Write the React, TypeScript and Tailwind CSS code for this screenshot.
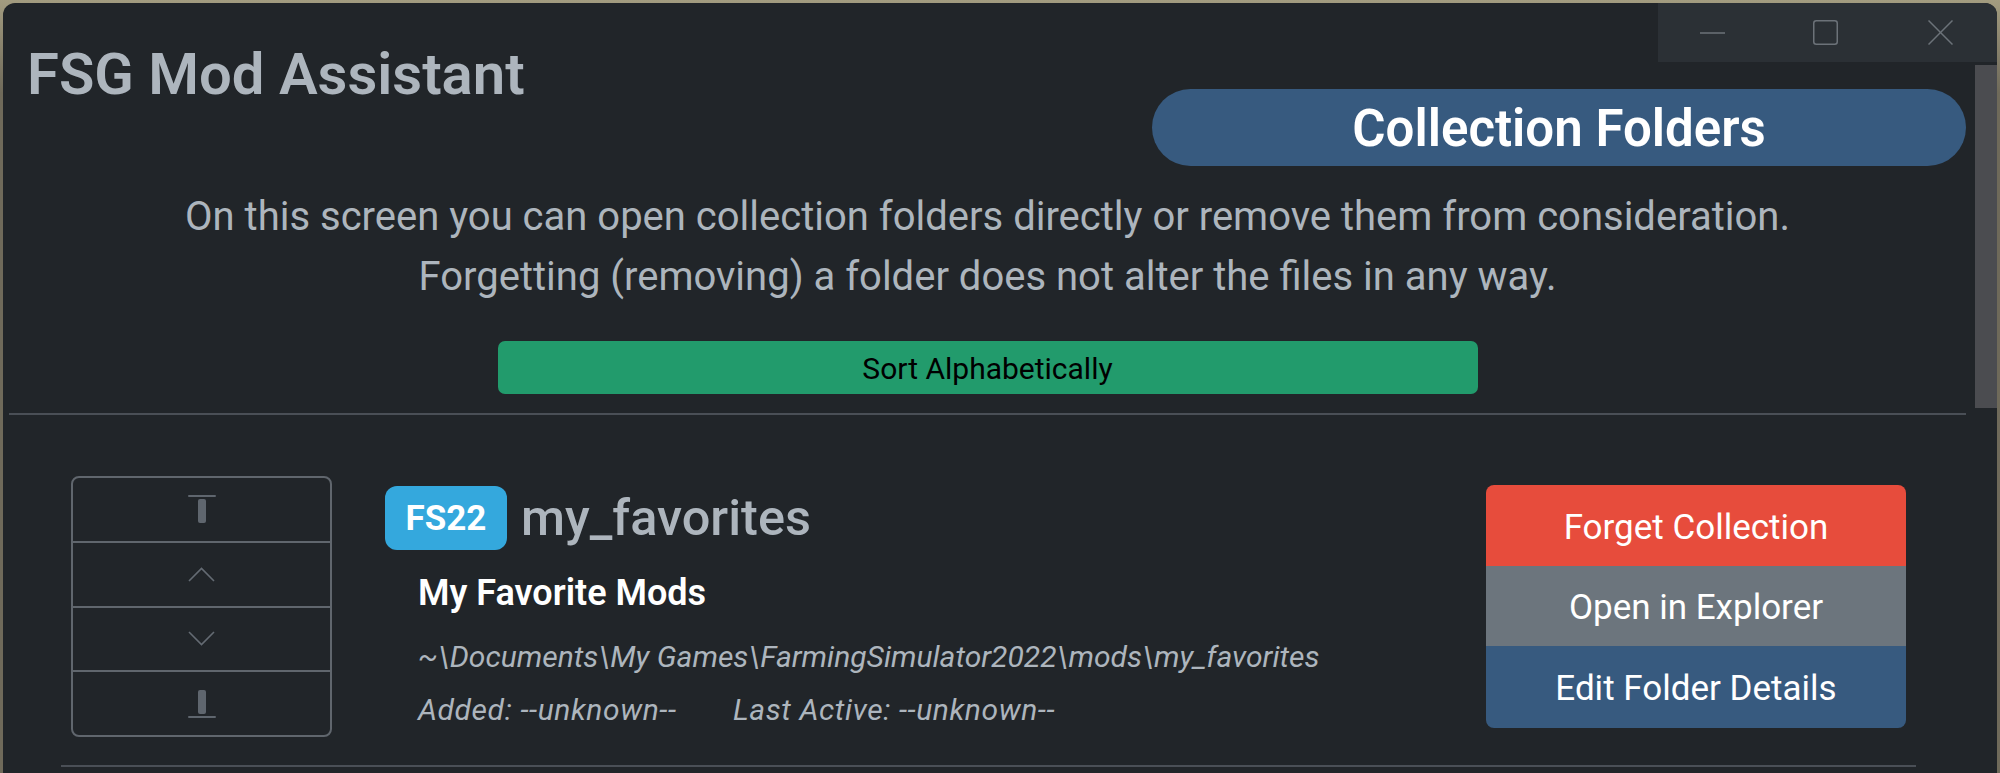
import React from "react";

function AlignTop() {
  return (
    <svg width="32" height="32" viewBox="0 0 16 16" fill="#5f666e">
      <rect width="4" height="12" rx="1" transform="matrix(1 0 0 -1 6 15)" />
      <path d="M1.5 2a.5.5 0 0 1 0-1v1zm13-1a.5.5 0 0 1 0 1V1zm-13 0h13v1h-13V1z" />
    </svg>
  );
}

function AlignBottom() {
  return (
    <svg width="32" height="32" viewBox="0 0 16 16" fill="#5f666e">
      <rect width="4" height="12" x="6" y="1" rx="1" />
      <path d="M1.5 14a.5.5 0 0 0 0 1v-1zm13 1a.5.5 0 0 0 0-1v1zm-13 0h13v-1h-13v1z" />
    </svg>
  );
}

function ChevronUp() {
  return (
    <svg width="27" height="15" viewBox="0 0 27 15" fill="none">
      <polyline points="1,14 13.5,1.5 26,14" stroke="#646b73" strokeWidth="1.6" />
    </svg>
  );
}

function ChevronDown() {
  return (
    <svg width="27" height="15" viewBox="0 0 27 15" fill="none">
      <polyline points="1,1 13.5,13.5 26,1" stroke="#646b73" strokeWidth="1.6" />
    </svg>
  );
}

export default function App() {
  return (
    <div className="w-[2000px] h-[773px] overflow-hidden bg-linear-to-b from-[#a39c80] to-[#6f6a5a] to-[12%] pt-[3px] px-[3px] font-[Roboto,sans-serif]">
      <div className="relative h-[770px] rounded-t-[12px] bg-[#212529] overflow-hidden">
        {/* window controls */}
        <div className="absolute right-0 top-0 w-[339px] h-[59px] bg-[#2b3035] flex items-center">
          <svg className="ml-[42px]" width="25" height="2" viewBox="0 0 25 2">
            <line x1="0" y1="1" x2="25" y2="1" stroke="#6c7279" strokeWidth="1.5" />
          </svg>
          <svg className="ml-[88px]" width="25" height="25" viewBox="0 0 25 25" fill="none">
            <rect x="0.75" y="0.75" width="23.5" height="23.5" rx="2.5" stroke="#6c7279" strokeWidth="1.5" />
          </svg>
          <svg className="ml-[90px]" width="25" height="25" viewBox="0 0 25 25" fill="none">
            <line x1="0.5" y1="0.5" x2="24.5" y2="24.5" stroke="#6c7279" strokeWidth="1.5" />
            <line x1="24.5" y1="0.5" x2="0.5" y2="24.5" stroke="#6c7279" strokeWidth="1.5" />
          </svg>
        </div>
        {/* scrollbar */}
        <div className="absolute right-0 top-[62px] w-[22px] h-[343px] bg-[#4b4c50]" />

        <div className="ml-[6px] mr-[31px]">
          <div className="flex items-start justify-between">
            <h1 className="pl-[18px] pt-[38px] text-[58px] leading-[67px] font-semibold text-[#adb5bd]">
              FSG Mod Assistant
            </h1>
            <div className="mt-[86px] w-[814px] h-[77px] rounded-full bg-[#375a7f] flex items-center justify-center pt-[4px] text-white text-[51px] font-semibold">
              Collection Folders
            </div>
          </div>

          <div className="mt-[21px] text-center text-[40px] leading-[60px] text-[#adb5bd]">
            <p>On this screen you can open collection folders directly or remove them from consideration.</p>
            <p>Forgetting (removing) a folder does not alter the files in any way.</p>
          </div>

          <div className="mt-[34px] mx-auto w-[980px] h-[53px] rounded-[7px] bg-[#229b6c] flex items-center justify-center pt-[2px] text-[30px] text-black">
            Sort Alphabetically
          </div>

          <div className="mt-[19px] h-[2px] bg-[#4a4f56]" />

          <div className="ml-[52px] mr-[50px]">
            <div className="mt-[61px] flex items-start px-[10px]">
              <div className="w-[261px] h-[261px] shrink-0 rounded-[8px] border-2 border-[#60666d] flex flex-col overflow-hidden">
                <div className="flex-1 flex items-center justify-center">
                  <AlignTop />
                </div>
                <div className="flex-1 flex items-center justify-center border-t-2 border-[#60666d]">
                  <ChevronUp />
                </div>
                <div className="flex-1 flex items-center justify-center border-t-2 border-[#60666d]">
                  <ChevronDown />
                </div>
                <div className="flex-1 flex items-center justify-center border-t-2 border-[#60666d]">
                  <AlignBottom />
                </div>
              </div>

              <div className="ml-[53px] mt-[10px] flex-1 min-w-0">
                <div className="flex items-center">
                  <span className="w-[122px] h-[64px] rounded-[12px] bg-[#34a8dd] text-white font-bold text-[35px] flex items-center justify-center pt-[2px]">
                    FS22
                  </span>
                  <span className="ml-[14px] text-[50.5px] leading-[60px] text-[#adb5bd] font-medium">
                    my_favorites
                  </span>
                </div>
                <div className="pl-[33px] mt-[22px] text-[36px] leading-[42px] font-semibold text-white">
                  My Favorite Mods
                </div>
                <div className="pl-[33px] mt-[26px] text-[30px] leading-[34px] italic text-[#adb5bd]">
                  {"~\\Documents\\My Games\\FarmingSimulator2022\\mods\\my_favorites"}
                </div>
                <div className="pl-[33px] mt-[19px] text-[30px] leading-[34px] italic text-[#adb5bd] whitespace-nowrap">
                  <span className="inline-block w-[315px] tracking-[0.6px]">Added: --unknown--</span>
                  <span className="tracking-[0.6px]">Last Active: --unknown--</span>
                </div>
              </div>

              <div className="w-[420px] shrink-0 mt-[9px] rounded-[8px] overflow-hidden flex flex-col text-[35px] text-white">
                <div className="h-[81px] bg-[#e74c3c] flex items-center justify-center pt-[5px]">Forget Collection</div>
                <div className="h-[80px] bg-[#6c757d] flex items-center justify-center pt-[5px]">Open in Explorer</div>
                <div className="h-[82px] bg-[#375a7f] flex items-center justify-center pt-[5px]">Edit Folder Details</div>
              </div>
            </div>
            <div className="mt-[28px] h-[2px] bg-[#4a4f56]" />
          </div>
        </div>
      </div>
    </div>
  );
}
